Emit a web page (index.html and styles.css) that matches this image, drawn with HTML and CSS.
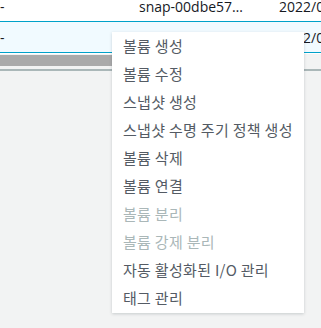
FILE: index.html
```html
<!DOCTYPE html>
<html>
  <head>
    <meta charset="utf-8" />
    <title>스냅샷</title>
    <link rel="stylesheet" href="styles.css">
  </head>
  <body>
    <div class="table-wrap">
      <div class="row">
        <div class="cell">-</div>
        <div class="cell">snap-00dbe57…</div>
        <div class="cell">2022/09/14</div>
      </div>
      <div class="row row-selected">
        <div class="cell">-</div>
        <div class="cell">snap-0a41c2f…</div>
        <div class="cell">2022/09/14</div>
      </div>
      <div class="scrollbar">
        <div class="scroll-thumb"></div>
      </div>
    </div>

    <ul class="menu">
      <li class="menu-item">볼륨 생성</li>
      <li class="menu-item">볼륨 수정</li>
      <li class="menu-item">스냅샷 생성</li>
      <li class="menu-item">스냅샷 수명 주기 정책 생성</li>
      <li class="menu-item">볼륨 삭제</li>
      <li class="menu-item">볼륨 연결</li>
      <li class="menu-item menu-item-disabled">볼륨 분리</li>
      <li class="menu-item menu-item-disabled">볼륨 강제 분리</li>
      <li class="menu-item">자동 활성화된 I/O 관리</li>
      <li class="menu-item">태그 관리</li>
    </ul>
  </body>
</html>
```

FILE: styles.css
```css
* {
  margin: 0;
  padding: 0;
  box-sizing: border-box;
}
body {
  min-height: 100vh;
  font-family: "Open Sans", "Noto Sans CJK KR", sans-serif;
  background: #f2f3f3;
  color: #16191f;
  overflow: hidden;
}
.table-wrap {
  margin-top: -9px;
  background: white;
  overflow: hidden;
  border-bottom: 2px solid #aab7b8;
}
.row {
  display: grid;
  grid-template-columns: 139px 140px 1fr;
  height: 31px;
  border-bottom: 1px solid #00a1c9;
  font-size: 14px;
  white-space: nowrap;
}
.row-selected {
  background: #f1faff;
}
.cell {
  display: flex;
  align-items: center;
  overflow: hidden;
}
.scrollbar {
  height: 16px;
  background: #f2f3f3;
  border-top: 1px solid white;
  padding: 1px 0 2px;
}
.scroll-thumb {
  width: 250px;
  height: 11px;
  background: #aaaaaa;
}
.menu {
  position: absolute;
  left: 112px;
  top: 32px;
  width: 192px;
  padding: 0 0 1px;
  list-style: none;
  background: white;
  box-shadow: 0 1px 3px rgba(0, 28, 36, 0.18);
  font-family: "Noto Sans CJK KR", "Open Sans", sans-serif;
  font-size: 15px;
  letter-spacing: 0.3px;
}
.menu-item {
  height: 28px;
  line-height: 28px;
  padding: 0 11px;
  color: #545b64;
  white-space: nowrap;
}
.menu-item-disabled {
  color: #aab7b8;
}
```
